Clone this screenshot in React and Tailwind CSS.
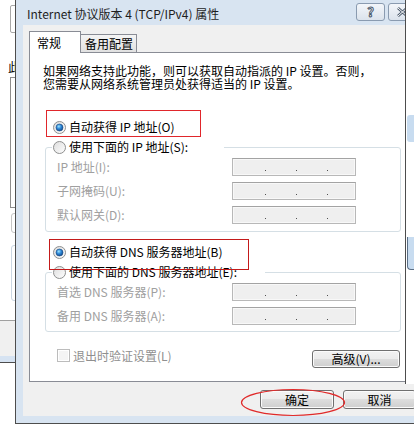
import React from "react";

function Radio({ checked }) {
  return (
    <svg width="13" height="13" viewBox="0 0 13 13" className="shrink-0">
      <defs>
        <linearGradient id="rgbg" x1="0" y1="0" x2="1" y2="1">
          <stop offset="0" stopColor="#dcdcdc" />
          <stop offset="1" stopColor="#ffffff" />
        </linearGradient>
        <radialGradient id="rgdot" cx="0.4" cy="0.35" r="0.75">
          <stop offset="0" stopColor="#9be4ff" />
          <stop offset="0.45" stopColor="#2d86d6" />
          <stop offset="1" stopColor="#0d3f7e" />
        </radialGradient>
      </defs>
      <circle cx="6.5" cy="6.5" r="6" fill="url(#rgbg)" stroke="#8e8f8f" />
      {checked && <circle cx="6.5" cy="6.5" r="3.5" fill="url(#rgdot)" stroke="#17467f" strokeWidth="0.6" />}
    </svg>
  );
}

function IpBox() {
  return (
    <div className="flex h-[18px] w-[124px] items-end gap-[30px] border border-[#b8b8b8] border-t-[#a3a3a3] bg-[#efefef] pb-[4px] pl-[32px] shadow-[inset_0_0_0_1px_#f8f8f8]">
      <span className="h-px w-px bg-[#505050]" />
      <span className="h-px w-px bg-[#505050]" />
      <span className="h-px w-px bg-[#505050]" />
    </div>
  );
}

function Row({ label }) {
  return (
    <div className="flex h-[18px] items-center">
      <span className="w-[175px] text-[12px] leading-[14px] text-[#a0a0a0]">{label}</span>
      <IpBox />
    </div>
  );
}

function Btn({ children, w }) {
  return (
    <div
      className={`flex ${w} items-center justify-center rounded-[3px] border border-[#707070] bg-[linear-gradient(#f2f2f2_0%,#ebebeb_50%,#dddddd_50%,#cfcfcf_100%)] text-[12px] leading-[14px] text-black shadow-[inset_0_0_0_1px_#fbfbfb]`}
    >
      {children}
    </div>
  );
}

export default function App() {
  return (
    <div className="relative h-[440px] w-[414px] overflow-hidden bg-white font-['Noto_Sans_CJK_SC',sans-serif] text-black">
      {/* background window fragments */}
      <div className="absolute left-[10px] top-[5px] h-[28px] w-[20px] rounded-[2px] border border-[#a8a8a8] bg-white" />
      <div className="absolute left-[8px] top-[60px] text-[12px] leading-[14px]">此</div>
      <div className="absolute left-[10px] top-[77px] h-[131px] w-[20px] border border-[#8d8d8d] bg-white" />
      <div className="absolute left-[11px] top-[213px] h-[20px] w-[20px] rounded-[3px] border border-[#c5c5c5]" />
      <div className="absolute left-[11px] top-[245px] h-[56px] w-[20px] rounded-[3px] border border-[#cad6e2]" />
      <div className="absolute left-0 top-[320px] flex h-[43px] w-[20px] flex-col border-b border-t border-b-[#4d4d4d] border-t-[#a0a0a0] bg-[#f0f0f0]">
        <div className="mt-auto h-[6px] bg-[#d6e3f2]" />
      </div>

      {/* dialog window */}
      <div className="absolute left-[15px] top-0 flex h-[424px] w-[420px] flex-col border-b border-l border-[#4d4d4d] bg-[#d8e4f1]">
        {/* title bar */}
        <div className="flex h-[25px] shrink-0 items-start">
          <span className="ml-[11px] mt-[6px] text-[12px] leading-[16px] text-[#1e1e1e]">
            Internet 协议版本 4 (TCP/IPv4) 属性
          </span>
          <div className="ml-auto mr-[4px] mt-[3px] flex gap-[3px]">
            <div className="flex h-[18px] w-[29px] items-center justify-center rounded-[3px] border border-[#8a9bb0] bg-[linear-gradient(#f3f6fa,#dbe3ec)] text-[13px] font-bold leading-[14px] text-white [-webkit-text-stroke:1px_#4b5a6c]">
              ?
            </div>
            <div className="flex h-[18px] w-[43px] items-center rounded-[3px] border border-[#8a9bb0] bg-[linear-gradient(#f3f6fa,#dbe3ec)] pl-[8px]">
              <svg width="11" height="10" viewBox="0 0 11 10">
                <path d="M1 1 L10 9 M10 1 L1 9" stroke="#4b5a6c" strokeWidth="2.6" />
                <path d="M1 1 L10 9 M10 1 L1 9" stroke="#ffffff" strokeWidth="1" />
              </svg>
            </div>
          </div>
        </div>

        {/* interior */}
        <div className="ml-[7px] flex h-[391px] shrink-0 flex-col bg-[#f0f0f0] pl-[6px] pt-[6px]">
          {/* tabs */}
          <div className="relative z-10 flex h-[21px] items-end">
            <div className="mb-[-1px] flex h-[22px] w-[52px] items-center border-l border-r border-t border-[#898c95] bg-white pl-[7px] text-[12px] leading-[14px]">
              常规
            </div>
            <div className="flex h-[18px] w-[56px] items-center border-r border-t border-[#898c95] bg-[linear-gradient(#f4f4f4,#e1e1e1)] pl-[4px] text-[12px] leading-[14px]">
              备用配置
            </div>
          </div>

          {/* panel */}
          <div className="flex w-[377px] flex-col border border-[#898c95] bg-white pb-[13px]">
            <p className="ml-[13px] mt-[11px] text-[12px] leading-[13px]">
              如果网络支持此功能，则可以获取自动指派的 IP 设置。否则，
              <br />
              您需要从网络系统管理员处获得适当的 IP 设置。
            </p>

            <div className="ml-[23px] mt-[30px] flex h-[14px] items-center gap-[3px] text-[12px] leading-[14px]">
              <Radio checked />
              <span>自动获得 IP 地址(O)</span>
            </div>

            <fieldset className="ml-[15px] mt-[6px] w-[356px] rounded-[3px] border border-[#d5dfe5] pb-[7px] pl-[11px] pt-[4px]">
              <legend className="ml-[-5px] flex h-[14px] w-[172px] items-center gap-[3px] pl-px text-[12px] leading-[14px]">
                <Radio />
                <span>使用下面的 IP 地址(S):</span>
              </legend>
              <div className="flex flex-col gap-[6px]">
                <Row label="IP 地址(I):" />
                <Row label="子网掩码(U):" />
                <Row label="默认网关(D):" />
              </div>
            </fieldset>

            <div className="ml-[23px] mt-[13px] flex h-[14px] items-center gap-[3px] text-[12px] leading-[14px]">
              <Radio checked />
              <span>自动获得 DNS 服务器地址(B)</span>
            </div>

            <fieldset className="ml-[15px] mt-[6px] w-[356px] rounded-[3px] border border-[#d5dfe5] pb-[6px] pl-[11px] pt-[4px]">
              <legend className="ml-[-5px] flex h-[14px] w-[213px] items-center gap-[3px] pl-px text-[12px] leading-[14px]">
                <Radio />
                <span>使用下面的 DNS 服务器地址(E):</span>
              </legend>
              <div className="flex flex-col gap-[6px]">
                <Row label="首选 DNS 服务器(P):" />
                <Row label="备用 DNS 服务器(A):" />
              </div>
            </fieldset>

            <div className="mt-[17px] flex items-start">
              <div className="ml-[27px] flex h-[13px] items-center gap-[3px]">
                <div className="h-[13px] w-[13px] border border-[#bcbcbc] bg-[#f4f4f4] shadow-[inset_0_0_0_1px_#ffffff]" />
                <span className="text-[12px] leading-[14px] text-[#8f8f8f]">退出时验证设置(L)</span>
              </div>
              <div className="ml-auto mr-[5px] mt-px">
                <Btn w="h-[18px] w-[88px]">高级(V)...</Btn>
              </div>
            </div>
          </div>

          {/* OK / Cancel */}
          <div className="ml-[231px] mt-[8px] flex gap-[9px]">
            <Btn w="h-[19px] w-[74px]">确定</Btn>
            <Btn w="h-[19px] w-[73px]">取消</Btn>
          </div>
        </div>
      </div>

      {/* right strip (window edge overlapping) */}
      <div className="absolute left-[405px] top-0 flex h-[384px] w-[9px] flex-col border-l border-[#4d4d4d] bg-white">
        <div className="ml-px mt-[115px] h-[27px] rounded-l-[3px] bg-[#c8dcf0]" />
        <div className="ml-px mt-[95px] h-[33px] rounded-bl-[4px] border-b border-l border-[#5b6f86] bg-[#c8dcf0]" />
      </div>

      {/* annotations */}
      <div className="absolute left-[46px] top-[110px] h-[27px] w-[155px] border border-[#e0262b]" />
      <div className="absolute left-[49px] top-[239px] h-[31px] w-[200px] border border-[#c41a1a]" />
      <svg className="absolute left-[240px] top-[388px]" width="106" height="29" viewBox="0 0 106 29">
        <ellipse cx="53" cy="14.5" rx="51.5" ry="13" fill="none" stroke="#e02a2a" strokeWidth="1.2" />
      </svg>
    </div>
  );
}
